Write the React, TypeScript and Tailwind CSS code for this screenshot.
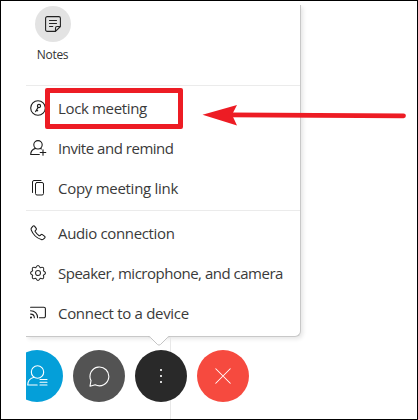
import type { ReactNode } from 'react';

const stroke = {
  fill: 'none',
  stroke: 'currentColor',
  strokeLinecap: 'round',
  strokeLinejoin: 'round',
} as const;

const NotesIcon = () => (
  <svg width="16" height="16" viewBox="0 0 16 16" {...stroke} strokeWidth="1.1">
    <path d="M10.5 15.4H2.2A1.6 1.6 0 0 1 .6 13.8V2.2A1.6 1.6 0 0 1 2.2.6h11.6a1.6 1.6 0 0 1 1.6 1.6v8.3l-4.9 4.9v-3.3a1.6 1.6 0 0 1 1.6-1.6h3.3M4.5 4.5h7M4.5 7.5h7M4.5 10.5h3.3" />
  </svg>
);

const LockIcon = () => (
  <svg width="16" height="16" viewBox="0 0 16 16" {...stroke} strokeWidth="1.1">
    <circle cx="8" cy="8" r="7.3" />
    <circle cx="9" cy="6" r="1.6" />
    <path d="M8.1 7.4 5.6 11.6M6.5 10l1.2.8" />
  </svg>
);

const InviteIcon = () => (
  <svg width="17" height="16" viewBox="0 0 17 16" {...stroke} strokeWidth="1.1">
    <circle cx="8" cy="4.8" r="4.2" />
    <path d="M5.6 8.4C2.6 9.3.7 11.5.7 14.5h8.6M10.3 8.4l1.2.5M13 9.7v5.6M10.2 12.5h5.6" />
  </svg>
);

const CopyIcon = () => (
  <svg width="16" height="16" viewBox="0 0 16 16" {...stroke} strokeWidth="1">
    <rect x="5.5" y="2.5" width="8" height="12.5" rx="1.5" />
    <path d="M2.5 12.5V2A1.5 1.5 0 0 1 4 .5h7" />
  </svg>
);

const PhoneIcon = () => (
  <svg width="16" height="16" viewBox="0 0 16 16" {...stroke} strokeWidth="1.1">
    <path d="M1.5 2.8 3 1.1c.5-.5 1.1-.5 1.5 0l1.7 2.2c.3.4.3.9 0 1.3l-.9 1c-.3.4-.3.8 0 1.2 1 1.5 2.1 2.7 3.6 3.7.4.3.8.3 1.2 0l1-.9c.4-.3.9-.3 1.3 0l2.3 1.8c.5.4.5 1 .1 1.4l-1.4 1.4c-.6.5-1.3.7-2.1.4C6.5 13 3 9.6 1.2 4.9c-.3-.8-.2-1.5.3-2.1Z" />
  </svg>
);

const GearIcon = () => (
  <svg className="text-[#2c2c2c]" width="16" height="16" viewBox="0 0 16 16" {...stroke} strokeWidth="1.05">
    <circle cx="8" cy="8" r="2.5" />
    <path d="M5.78 2.64Q8-1.6 10.22 2.64 14.8 1.2 13.36 5.78 17.6 8 13.36 10.22 14.8 14.8 10.22 13.36 8 17.6 5.78 13.36 1.2 14.8 2.64 10.22-1.6 8 2.64 5.78 1.2 1.2 5.78 2.64Z" />
  </svg>
);

const CastIcon = () => (
  <svg width="16" height="14" viewBox="0 0 16 14" {...stroke} strokeWidth="1.1">
    <path d="M.6 1.2h13.3a1.5 1.5 0 0 1 1.5 1.5v7.6a1.5 1.5 0 0 1-1.5 1.5H9.500M.6 4.7c4.1 0 7 2.9 7 7.1M.6 8.1c2.2 0 3.7 1.5 3.7 3.7" />
    <circle cx="1" cy="11.5" r=".5" />
  </svg>
);

const MenuItem = ({ icon, label, tracking }: { icon: ReactNode; label: string; tracking: string }) => (
  <button className="flex h-10 w-full items-center pl-1 text-left">
    <span className="flex w-7 shrink-0 items-center">{icon}</span>
    <span className={`text-[15px] leading-5 whitespace-nowrap text-[#3a3a3a] ${tracking}`}>{label}</span>
  </button>
);

const ControlButton = ({ color, children }: { color: string; children: ReactNode }) => (
  <button className={`flex size-[52px] shrink-0 items-center justify-center rounded-full text-white ${color}`}>
    {children}
  </button>
);

const MorePanel = () => (
  <div className="relative h-[332px] w-[275px] rounded-br-md border-r border-b border-[#c8c8c8] bg-white pt-px shadow-[2px_2px_4px_rgba(0,0,0,0.1)]">
    <div className="ml-[9px] flex size-9 items-center justify-center rounded-full bg-[#e3e3e3] text-[#222]">
      <NotesIcon />
    </div>
    <div className="mt-1 w-[53px] text-center text-[12px] leading-[18px] tracking-[-0.3px] text-[#333]">Notes</div>

    <div className="mt-[21px] border-t border-[#ebebeb] pt-[2px] text-[#1c1c1c]">
      <MenuItem icon={<LockIcon />} label="Lock meeting" tracking="tracking-[-0.35px]" />
      <MenuItem icon={<InviteIcon />} label="Invite and remind" tracking="tracking-[-0.47px]" />
      <MenuItem icon={<CopyIcon />} label="Copy meeting link" tracking="tracking-[-0.28px]" />
    </div>
    <div className="mt-[2px] border-t border-[#ebebeb] pt-[2px] text-[#1c1c1c]">
      <MenuItem icon={<PhoneIcon />} label="Audio connection" tracking="tracking-[-0.35px]" />
      <MenuItem icon={<GearIcon />} label="Speaker, microphone, and camera" tracking="tracking-[-0.49px]" />
      <MenuItem icon={<CastIcon />} label="Connect to a device" tracking="tracking-[-0.31px]" />
    </div>

    {/* pointer towards the "more" button */}
    <svg className="absolute top-[330px] left-[121px]" width="24" height="13" viewBox="0 0 24 13">
      <path d="M1 0v1l2 .5 7.5 8.5q1.5 1.5 3 0L21 1.5 23 1V0Z" fill="#fff" />
      <path d="M1 1.5q1.5 0 2.5 1l7 7q1.5 1.3 3 0l7-7q1-1 2.5-1" fill="none" stroke="#c4c4c4" />
    </svg>
  </div>
);

export default function App() {
  return (
    <div
      className="relative h-[420px] w-[418px] overflow-hidden border border-black bg-white"
      style={{ fontFamily: '"Open Sans", "Noto Sans", sans-serif' }}
    >
      <div className="mt-1 ml-[25px] h-[414px] w-[385px] overflow-hidden">
        <MorePanel />
        <div className="relative flex h-[82px] items-start pt-[13px]">
          <div className="absolute top-0 left-[144px] h-full w-px bg-[#e8e8e8]" />
          <div className="relative -ml-[15px] flex gap-[10px]">
            <ControlButton color="bg-[#049fd9]">
              <svg width="21" height="22" viewBox="0 0 21 22" {...stroke} strokeWidth="1.1">
                <circle cx="10.5" cy="7" r="6.2" />
                <path d="M7 12.2C3 13.2.7 16 .7 20h9.500M13 14.5h7M13 17.3h7M13 20h7" />
              </svg>
            </ControlButton>
            <ControlButton color="bg-[#535353]">
              <svg width="21" height="21" viewBox="0 0 21 21" {...stroke} strokeWidth="1.1">
                <path d="M1 20.2 2 14.6A9.4 9.4 0 1 1 6.2 18.8Z" />
              </svg>
            </ControlButton>
            <ControlButton color="bg-[#292929]">
              <svg className="text-[#d4d4d4]" width="2" height="14" viewBox="0 0 2 14" fill="currentColor">
                <path d="M0 0h2v2H0zM0 6h2v2H0zM0 12h2v2H0z" />
              </svg>
            </ControlButton>
            <ControlButton color="bg-[#f64a3f]">
              <svg width="16" height="16" viewBox="0 0 17 17" {...stroke} strokeWidth="1.1">
                <path d="m.8.8 15.4 15.4M16.2.8.8 16.2" />
              </svg>
            </ControlButton>
          </div>
        </div>
      </div>

      {/* highlight box and arrow over the menu */}
      <div className="absolute top-[87px] left-[44px] h-[41px] w-[138px] rounded-[2px] border-[5px] border-[#ed1c24]" />
      <svg className="absolute top-[101px] left-[199px]" width="208" height="26" viewBox="0 0 208 26">
        <path d="M30 12.8 203.5 13.8" stroke="#ed1c24" strokeWidth="4.8" strokeLinecap="round" />
        <path d="M2.5 12.8 37 3 32 12.8 37 23.5Z" fill="#ed1c24" />
      </svg>
    </div>
  );
}
